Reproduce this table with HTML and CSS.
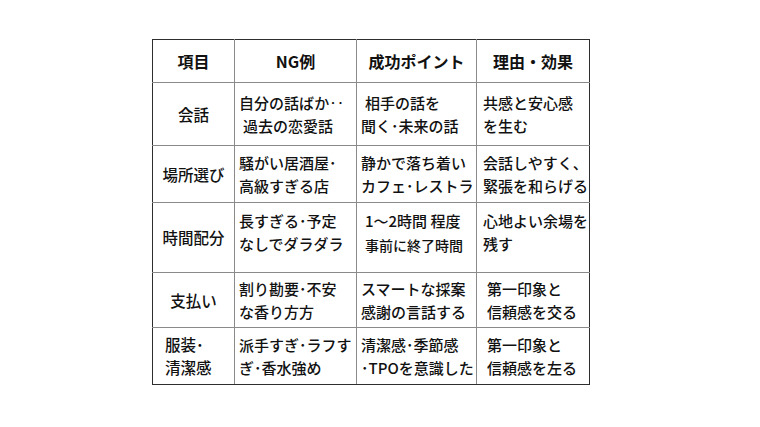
FILE: index.html
```html
<!DOCTYPE html>
<html lang="ja">
<head>
<meta charset="utf-8">
<link rel="stylesheet" href="styles.css">
</head>
<body>
<div class="page">
<table class="tbl">
<colgroup>
<col class="c1"><col class="c2"><col class="c3"><col class="c4">
</colgroup>
<thead>
<tr class="r0">
<th>項目</th><th>NG例</th><th>成功ポイント</th><th>理由・効果</th>
</tr>
</thead>
<tbody>
<tr class="r1">
<td class="cat">会話</td>
<td><span class="ln">自分の話ばか‥</span><span class="ln ind">過去の恋愛話</span></td>
<td><span class="ln ind">相手の話を</span><span class="ln">聞く･未来の話</span></td>
<td><span class="ln">共感と安心感</span><span class="ln">を生む</span></td>
</tr>
<tr class="r2">
<td class="cat">場所選び</td>
<td><span class="ln">騒がい居酒屋･</span><span class="ln">高級すぎる店</span></td>
<td><span class="ln">静かで落ち着い</span><span class="ln">カフェ･レストラ</span></td>
<td><span class="ln">会話しやすく、</span><span class="ln">緊張を和らげる</span></td>
</tr>
<tr class="r3">
<td class="cat">時間配分</td>
<td class="top"><span class="ln">長すぎる･予定</span><span class="ln">なしでダラダラ</span></td>
<td class="top"><span class="ln ind">1～2時間 程度</span><span class="ln sm ind">事前に終了時間</span></td>
<td class="top"><span class="ln">心地よい余場を</span><span class="ln">残す</span></td>
</tr>
<tr class="r4">
<td class="cat">支払い</td>
<td><span class="ln">割り勘要･不安</span><span class="ln">な香り方方</span></td>
<td><span class="ln">スマートな採案</span><span class="ln">感謝の言話する</span></td>
<td><span class="ln ind">第一印象と</span><span class="ln ind">信頼感を交る</span></td>
</tr>
<tr class="r5">
<td class="cat left"><span class="ln">服装･</span><span class="ln">清潔感</span></td>
<td><span class="ln">派手すぎ･ラフす</span><span class="ln">ぎ･香水強め</span></td>
<td><span class="ln">清潔感･季節感</span><span class="ln">･TPOを意識した</span></td>
<td><span class="ln ind">第一印象と</span><span class="ln ind">信頼感を左る</span></td>
</tr>
</tbody>
</table>
</div>
</body>
</html>
```

FILE: styles.css
```css
html, body {
  margin: 0;
  padding: 0;
  background: #ffffff;
}
.page {
  padding: 39px 0 0 152px;
  font-family: "Noto Sans CJK JP", "Noto Sans", sans-serif;
  color: #111111;
}
.tbl {
  border-collapse: collapse;
  table-layout: fixed;
  width: 437px;
  border: 1px solid #2e2e2e;
}
.c1 { width: 82px; }
.c2 { width: 122px; }
.c3 { width: 120px; }
.c4 { width: 113px; }
.tbl th, .tbl td {
  border: 1px solid #8a8a8a;
  padding: 0 0 0 4px;
  overflow: hidden;
  font-size: 15px;
  font-weight: 500;
  line-height: 23px;
  vertical-align: middle;
  text-align: left;
}
.tbl th {
  font-weight: 700;
  text-align: center;
  padding: 0;
  font-size: 16px;
}
.tbl tr > :first-child { border-left: 1px solid #2e2e2e; }
.tbl tr > :last-child { border-right: 1px solid #2e2e2e; }
.tbl thead th { border-top: 1px solid #2e2e2e; }
.tbl tbody tr:last-child td { border-bottom: 1px solid #2e2e2e; }
.r0 { height: 43px; }
.r1 { height: 63px; }
.r2 { height: 57px; }
.r3 { height: 70px; }
.r4 { height: 55px; }
.r5 { height: 57px; }
.tbl td.cat {
  text-align: center;
  padding: 0;
  font-size: 15.5px;
}
.tbl td.cat.left {
  text-align: left;
  padding-left: 12px;
}
.tbl td.top {
  vertical-align: top;
  padding-top: 6px;
}
.ln {
  display: block;
  white-space: nowrap;
}
.ln.ind {
  padding-left: 4px;
}
.ln.sm {
  font-size: 14px;
  line-height: 26px;
}
.tbl td:nth-child(4) { padding-left: 6px; }
```
